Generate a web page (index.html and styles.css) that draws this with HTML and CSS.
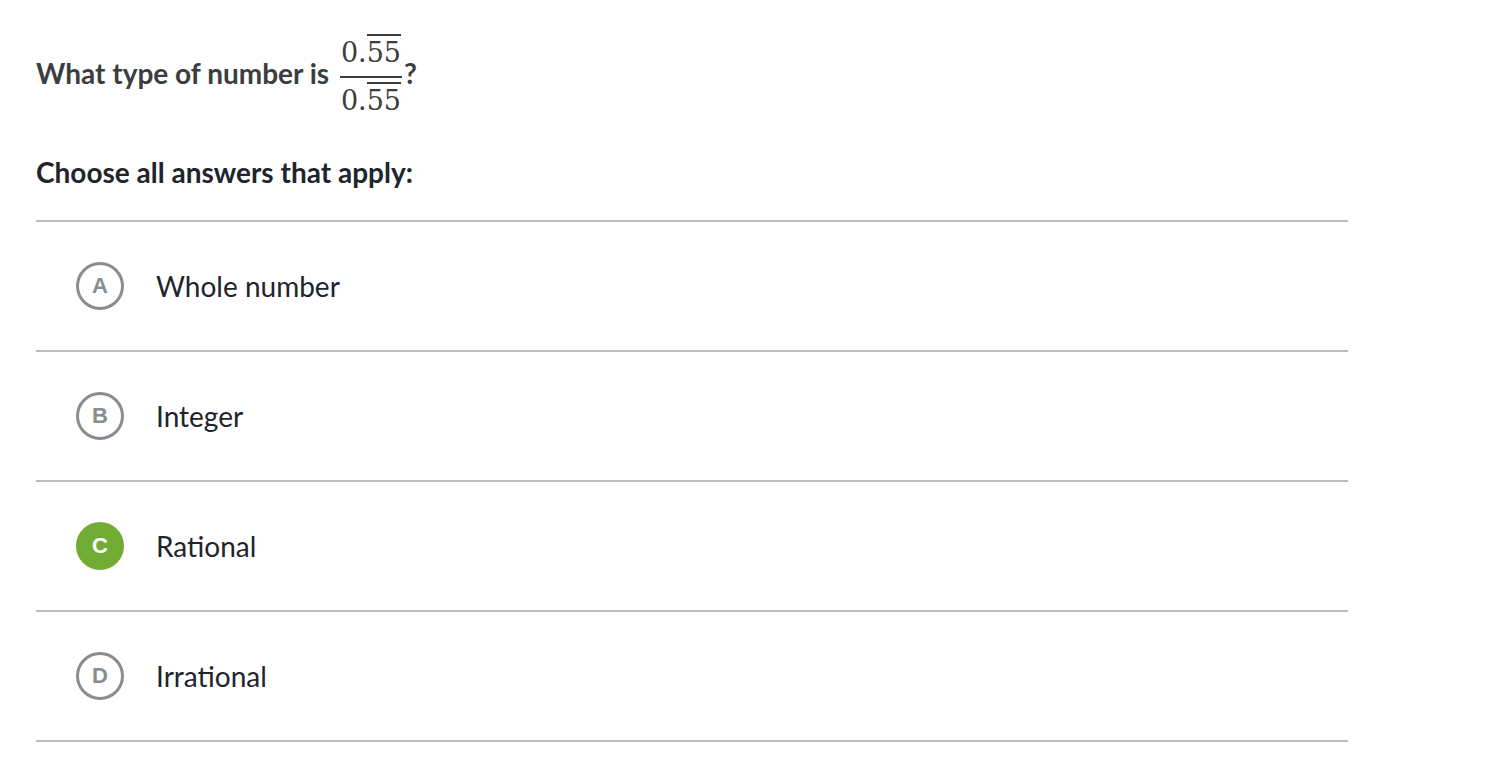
FILE: index.html
```html
<!DOCTYPE html>
<html>
<head>
<meta charset="utf-8">
<link rel="stylesheet" href="styles.css">
</head>
<body>
<div class="page">
  <div class="question">
    <span class="qtext">What type of number is </span><span class="frac"><span class="num">0.<span class="over">55</span></span><span class="bar"></span><span class="den">0.<span class="over">55</span></span></span><span class="qmark">?</span>
  </div>
  <div class="instr">Choose all answers that apply:</div>
  <ul class="choices">
    <li class="choice"><span class="badge">A</span><span class="label">Whole number</span></li>
    <li class="choice"><span class="badge">B</span><span class="label">Integer</span></li>
    <li class="choice"><span class="badge selected">C</span><span class="label">Rational</span></li>
    <li class="choice"><span class="badge">D</span><span class="label">Irrational</span></li>
  </ul>
</div>
</body>
</html>
```
FILE: styles.css
```css
html, body { margin: 0; padding: 0; background: #fff; }
.page {
  padding: 34px 0 0 36px;
  width: 1312px;
  font-family: Lato, "Open Sans", sans-serif;
}
.question {
  color: #3b3e40;
  font-weight: 700;
  font-size: 28px;
  line-height: normal;
}
.frac {
  display: inline-flex;
  flex-direction: column;
  align-items: center;
  vertical-align: middle;
  font-family: "DejaVu Serif", "Liberation Serif", serif;
  font-weight: 400;
  font-size: 27px;
  color: #3b3e40;
  margin-left: 4px;
  margin-right: 2px;
}
.num, .den {
  display: block;
  line-height: 33px;
  box-sizing: border-box;
  height: 42px;
  padding: 0 1px;
}
.den { padding-top: 4px; }
.over {
  display: inline-block;
  border-top: 2px solid #3b3e40;
}
.bar { display: block; align-self: stretch; height: 2px; background: #3b3e40; }
.instr {
  margin-top: 35px;
  font-size: 28px;
  line-height: normal;
  font-weight: 700;
  color: #21242c;
  padding-bottom: 31px;
  border-bottom: 2px solid #bdbdbd;
}
.choices { list-style: none; margin: 0; padding: 0; }
.choice {
  display: flex;
  align-items: center;
  height: 128px;
  border-bottom: 2px solid #bdbdbd;
  padding-left: 40px;
}
.badge {
  box-sizing: border-box;
  flex: none;
  width: 48px;
  height: 48px;
  border-radius: 50%;
  border: 3px solid #898c91;
  color: #898c91;
  display: flex;
  align-items: center;
  justify-content: center;
  font-family: "Liberation Sans", Arial, sans-serif;
  font-weight: 700;
  font-size: 22px;
  margin-right: 32px;
}
.badge.selected { background: #71ad35; border-color: #71ad35; color: #fff; }
.label { font-size: 28px; line-height: normal; color: #21242c; }
```
